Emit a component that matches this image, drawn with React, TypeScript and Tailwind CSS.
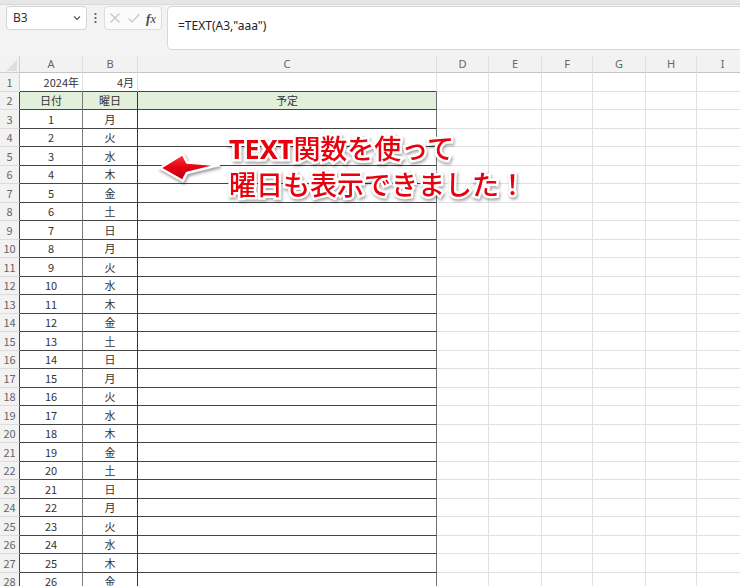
import React from "react";

const COLS = [
  { key: "A", w: "w-[63px]" },
  { key: "B", w: "w-[55px]" },
  { key: "C", w: "w-[299px]" },
  { key: "D", w: "w-[52px]" },
  { key: "E", w: "w-[53px]" },
  { key: "F", w: "w-[51px]" },
  { key: "G", w: "w-[53px]" },
  { key: "H", w: "w-[51px]" },
  { key: "I", w: "w-[52px]" },
];

const DAYS = ["月", "火", "水", "木", "金", "土", "日"];

const FONT = "[font-family:'Noto_Sans_CJK_JP','Noto_Sans',sans-serif]";

function cellText(row: number, col: number): { text: string; align: string } {
  if (row === 1) {
    if (col === 0) return { text: "2024年", align: "justify-end pr-[3px]" };
    if (col === 1) return { text: "4月", align: "justify-end pr-[3px]" };
    return { text: "", align: "" };
  }
  if (row === 2) {
    if (col === 0) return { text: "日付", align: "justify-center" };
    if (col === 1) return { text: "曜日", align: "justify-center" };
    if (col === 2) return { text: "予定", align: "justify-center" };
    return { text: "", align: "" };
  }
  if (col === 0) return { text: String(row - 2), align: "justify-center" };
  if (col === 1) return { text: DAYS[(row - 3) % 7], align: "justify-center" };
  return { text: "", align: "" };
}

function cellBorder(row: number, col: number): string {
  const inTable = row >= 2 && col <= 2;
  let b = "";
  if (inTable) {
    b += " border-b-[#444]";
  } else if (row === 1 && col <= 2) {
    b += " border-b-[#444]";
  } else {
    b += " border-b-[#e1e1e1]";
  }
  if (inTable) {
    if (col === 0) b += " border-r-[#7a7a7a]";
    else if (col === 1) b += " border-r-[#333]";
    else b += " border-r-[#6f6f6f]";
  } else {
    b += " border-r-[#e1e1e1]";
  }
  return b;
}

function Row({ r }: { r: number }) {
  const h = r % 2 === 1 ? "h-[19px]" : "h-[18px]";
  return (
    <div className={`flex ${h}`}>
      <div
        className={`w-[20px] shrink-0 flex items-center justify-center bg-[#f2f2f2] border-b border-r border-b-[#dcdcdc] ${
          r >= 2 ? "border-r-[#444]" : "border-r-[#cfcfcf]"
        } text-[11px] text-[#666]`}
      >
        {r}
      </div>
      {COLS.map((c, i) => {
        const t = cellText(r, i);
        const bg = r === 2 && i <= 2 ? "bg-[#e2efda]" : "bg-white";
        return (
          <div
            key={c.key}
            className={`${c.w} shrink-0 flex items-center ${t.align} ${bg} border-b border-r ${cellBorder(
              r,
              i
            )} text-[11px] text-[#333] leading-none`}
          >
            {t.text}
          </div>
        );
      })}
    </div>
  );
}

export default function App() {
  const rows = Array.from({ length: 28 }, (_, i) => i + 1);
  return (
    <div className={`relative w-[740px] h-[586px] overflow-hidden bg-[#f3f3f3] ${FONT}`}>
      {/* top strip */}
      <div className="h-[5px] bg-[#e6e6e6] border-b border-[#d9d9d9]" />
      {/* formula bar */}
      <div className="flex items-start pl-[6px] pt-[1px] h-[51px]">
        <div className="w-[81px] h-[24px] bg-white border border-[#d4d4d4] rounded-[4px] flex items-center justify-between pl-[6px] pr-[4px]">
          <span className="text-[12px] text-[#333] [font-family:'Noto_Sans',sans-serif]">B3</span>
          <svg width="10" height="10" viewBox="0 0 10 10">
            <path d="M2 3.5 L5 6.5 L8 3.5" fill="none" stroke="#555" strokeWidth="1.2" />
          </svg>
        </div>
        <div className="w-[17px] h-[24px] flex items-center justify-center">
          <svg width="3" height="12" viewBox="0 0 3 12">
            <circle cx="1.5" cy="2" r="1.1" fill="#555" />
            <circle cx="1.5" cy="6" r="1.1" fill="#555" />
            <circle cx="1.5" cy="10" r="1.1" fill="#555" />
          </svg>
        </div>
        <div className="w-[58px] h-[24px] bg-[#fbfbfb] border border-[#dcdcdc] rounded-[4px] flex items-center pl-[3px] gap-[5px]">
          <svg width="14" height="14" viewBox="0 0 14 14">
            <path d="M2.5 2.5 L11.5 11.5 M11.5 2.5 L2.5 11.5" stroke="#c4c4c4" strokeWidth="1.1" />
          </svg>
          <svg width="14" height="14" viewBox="0 0 14 14">
            <path d="M1.5 7.5 L5 11 L12.5 3" fill="none" stroke="#c4c4c4" strokeWidth="1.1" />
          </svg>
          <span className="text-[13px] italic text-[#444] [font-family:'Liberation_Serif',serif] leading-none">
            <span className="font-bold">f</span>x
          </span>
        </div>
        <div className="ml-[5px] flex-1 h-[44px] bg-white border border-r-0 border-[#d8d8d8] rounded-l-[5px] pl-[10px] pt-[4px]">
          <span className="text-[12px] text-[#222] [font-family:'Noto_Sans',sans-serif]">=TEXT(A3,"aaa")</span>
        </div>
      </div>
      {/* column headers */}
      <div className="flex h-[17px]">
        <div className="relative w-[20px] shrink-0 border-r border-b border-[#cfcfcf] bg-[#f2f2f2]">
          <svg className="absolute left-[6px] top-[4px]" width="11" height="11" viewBox="0 0 11 11">
            <path d="M11 0 L11 11 L0 11 Z" fill="#dedede" />
          </svg>
        </div>
        {COLS.map((c) => (
          <div
            key={c.key}
            className={`${c.w} shrink-0 flex items-center justify-center bg-[#f2f2f2] border-r border-b border-r-[#e0e0e0] border-b-[#c4c4c4] text-[11px] text-[#666] [font-family:'Noto_Sans',sans-serif]`}
          >
            {c.key}
          </div>
        ))}
      </div>
      {/* rows */}
      <div className="flex flex-col">
        {rows.map((r) => (
          <Row key={r} r={r} />
        ))}
      </div>

      {/* arrow annotation */}
      <svg
        className="absolute left-[150px] top-[145px] drop-shadow-[1px_2px_1.5px_rgba(0,0,0,0.4)]"
        width="80"
        height="45"
        viewBox="0 0 80 45"
      >
        <defs>
          <linearGradient id="arrowGrad" x1="0" y1="0" x2="0" y2="1">
            <stop offset="0" stopColor="#ff3b3b" />
            <stop offset="0.5" stopColor="#e60012" />
            <stop offset="1" stopColor="#b3000c" />
          </linearGradient>
        </defs>
        <path
          d="M10 23 L33 9 Q35 14 37 17.5 L69 20 L37 28 Q35 31 33 36 Z"
          fill="url(#arrowGrad)"
          stroke="white"
          strokeWidth="2.5"
          strokeLinejoin="round"
        />
      </svg>

      {/* text annotation */}
      <div className="absolute left-[229px] top-[130px] text-[27px] leading-[35px] text-[#e8000d] whitespace-nowrap [-webkit-text-stroke:5px_white] [paint-order:stroke_fill] drop-shadow-[1px_2px_1.5px_rgba(0,0,0,0.35)] [font-family:'Noto_Sans_CJK_JP',sans-serif]">
        <div className="font-medium">
          <span className="font-bold [font-family:'Noto_Sans','Noto_Sans_CJK_JP',sans-serif]">TEXT</span>
          関数を使って
        </div>
        <div className="font-medium">曜日も表示できました！</div>
      </div>
    </div>
  );
}
